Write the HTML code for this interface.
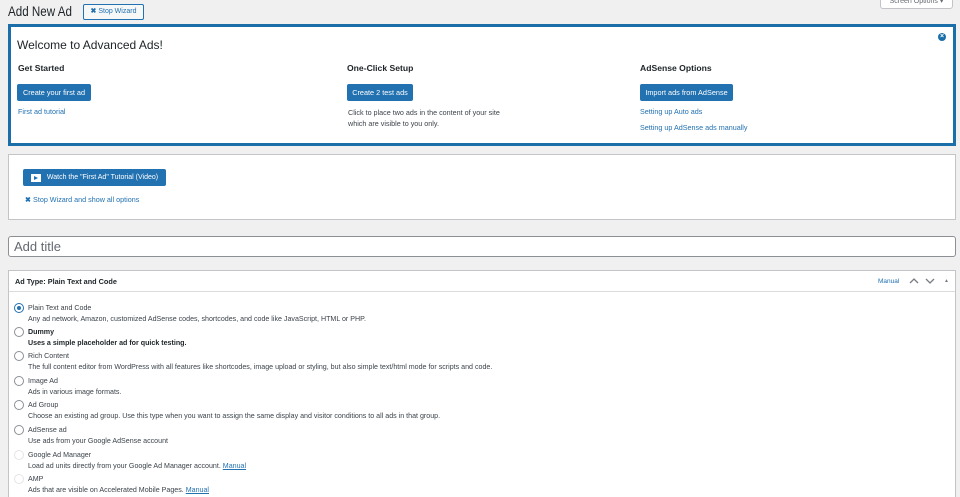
<!DOCTYPE html>
<html style="overflow:hidden;height:497px"><head><meta charset="utf-8"><style>
*{box-sizing:border-box;margin:0;padding:0}
body{width:960px;height:497px;overflow:hidden;background:#f0f0f1;font-family:"Liberation Sans",sans-serif;color:#3c434a;position:relative;font-size:8px}
.a{position:absolute;white-space:nowrap}
.btn{position:absolute;background:#2271b1;color:#fff;border-radius:2px;font-size:7.3px;display:flex;align-items:center;justify-content:center;height:17px}
.lnk{color:#2271b1}
.box{position:absolute;left:8px;width:948px;background:#fff;border:1px solid #c3c4c7}
h3{position:absolute;font-size:8.6px;font-weight:bold;color:#1d2327}
.r{position:absolute;left:14px;width:10px;height:10px;border:1px solid #8c8f94;border-radius:50%;background:#fff}
.t{position:absolute;left:28px;font-size:7.1px;color:#3c434a;white-space:nowrap}
</style></head><body>
<div class="a" style="left:8px;top:4px;font-size:13.5px;color:#1d2327;transform:scaleX(0.86);transform-origin:0 0">Add New Ad</div>
<div class="a" style="left:83px;top:4px;width:61px;height:16px;border:1px solid #2271b1;border-radius:2px;background:#f6f7f7;color:#2271b1;font-size:7px;line-height:14px;text-align:center"><b>✖</b> Stop Wizard</div>
<div class="a" style="left:880px;top:-6px;width:73px;height:15px;border:1px solid #c3c4c7;border-radius:0 0 3px 3px;background:#fff;color:#646970;font-size:7px;line-height:13px;text-align:center">Screen Options ▾</div>

<div class="a" style="left:8px;top:24px;width:948px;height:122px;background:#fff;border:3px solid #1a6fa8"></div>
<div class="a" style="left:17px;top:38px;font-size:12px;color:#1d2327">Welcome to Advanced Ads!</div>
<div class="a" style="left:938px;top:33px;width:8px;height:8px;border-radius:50%;background:#1a6fa8;color:#fff;font-size:7px;line-height:8px;text-align:center;font-weight:bold">×</div>
<h3 style="left:18px;top:63px">Get Started</h3>
<h3 style="left:347px;top:63px">One-Click Setup</h3>
<h3 style="left:640px;top:63px">AdSense Options</h3>
<div class="btn" style="left:17px;top:84px;width:74px">Create your first ad</div>
<div class="btn" style="left:347px;top:84px;width:66px">Create 2 test ads</div>
<div class="btn" style="left:640px;top:84px;width:93px">Import ads from AdSense</div>
<div class="a lnk" style="left:18px;top:107px;font-size:7.2px">First ad tutorial</div>
<div class="a" style="left:348px;top:107px;font-size:7.2px;line-height:11px">Click to place two ads in the content of your site<br>which are visible to you only.</div>
<div class="a lnk" style="left:640px;top:107px;font-size:7.2px">Setting up Auto ads</div>
<div class="a lnk" style="left:640px;top:123px;font-size:7.2px">Setting up AdSense ads manually</div>

<div class="box" style="top:154px;height:66px"></div>
<div class="btn" style="left:23px;top:169px;width:143px;font-size:7px"><span style="display:inline-block;width:10px;height:8px;background:#fff;margin-right:6px;position:relative"><span style="position:absolute;left:3px;top:2px;border-left:4px solid #2271b1;border-top:2px solid transparent;border-bottom:2px solid transparent"></span></span>Watch the "First Ad" Tutorial (Video)</div>
<div class="a lnk" style="left:25px;top:195px;font-size:7.2px"><b>✖</b> Stop Wizard and show all options</div>

<div class="a" style="left:8px;top:236px;width:948px;height:21px;background:#fff;border:1px solid #8c8f94;border-radius:3px"></div>
<div class="a" style="left:14px;top:239px;font-size:13px;color:#646970">Add title</div>

<div class="box" style="top:270px;height:240px"></div>
<div class="a" style="left:9px;top:291px;width:946px;height:1px;background:#dcdcde"></div>
<div class="a" style="left:15px;top:277px;font-size:7.3px;color:#1d2327;font-weight:bold">Ad Type: Plain Text and Code</div>
<div class="a lnk" style="left:878px;top:278px;font-size:6.5px">Manual</div>
<svg class="a" style="left:908px;top:277px" width="30" height="8" viewBox="0 0 30 8"><path d="M2 6L6 2L10 6M18 2L22 6L26 2" stroke="#787c82" stroke-width="1.3" fill="none"/></svg>
<div class="a" style="left:944px;top:278px;font-size:5px;color:#787c82">▲</div>

<div class="r" style="top:303px;border-color:#2271b1"><div style="margin:2px;width:4px;height:4px;border-radius:50%;background:#2271b1"></div></div>
<div class="t" style="top:304px">Plain Text and Code</div>
<div class="t" style="top:315px">Any ad network, Amazon, customized AdSense codes, shortcodes, and code like JavaScript, HTML or PHP.</div>
<div class="r" style="top:327px"></div>
<div class="t" style="top:328px;font-weight:bold;color:#1d2327">Dummy</div>
<div class="t" style="top:339px;font-weight:bold;color:#1d2327">Uses a simple placeholder ad for quick testing.</div>
<div class="r" style="top:351px"></div>
<div class="t" style="top:352px">Rich Content</div>
<div class="t" style="top:363px">The full content editor from WordPress with all features like shortcodes, image upload or styling, but also simple text/html mode for scripts and code.</div>
<div class="r" style="top:376px"></div>
<div class="t" style="top:377px">Image Ad</div>
<div class="t" style="top:388px">Ads in various image formats.</div>
<div class="r" style="top:400px"></div>
<div class="t" style="top:401px">Ad Group</div>
<div class="t" style="top:412px">Choose an existing ad group. Use this type when you want to assign the same display and visitor conditions to all ads in that group.</div>
<div class="r" style="top:425px"></div>
<div class="t" style="top:426px">AdSense ad</div>
<div class="t" style="top:437px">Use ads from your Google AdSense account</div>
<div class="r" style="top:450px;border-color:#e4e4e6"></div>
<div class="t" style="top:451px">Google Ad Manager</div>
<div class="t" style="top:462px">Load ad units directly from your Google Ad Manager account. <u class="lnk">Manual</u></div>
<div class="r" style="top:474px;border-color:#e4e4e6"></div>
<div class="t" style="top:475px">AMP</div>
<div class="t" style="top:486px">Ads that are visible on Accelerated Mobile Pages. <u class="lnk">Manual</u></div>
</body></html>
